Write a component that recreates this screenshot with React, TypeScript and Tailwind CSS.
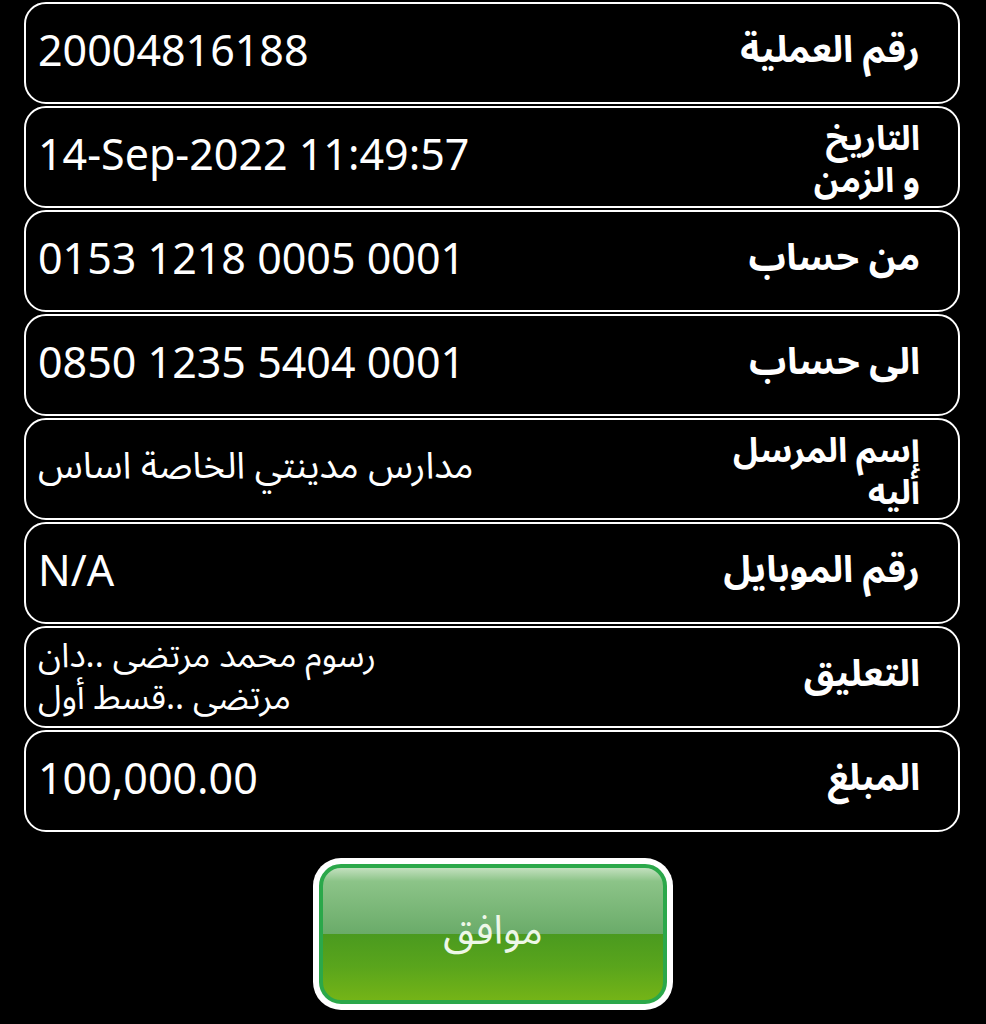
import React from "react";

const rows: { label: string[]; value: string[]; arabicValue?: boolean }[] = [
  { label: ["رقم العملية"], value: ["20004816188"] },
  { label: ["التاريخ", "و الزمن"], value: ["14-Sep-2022 11:49:57"] },
  { label: ["من حساب"], value: ["0153 1218 0005 0001"] },
  { label: ["الى حساب"], value: ["0850 1235 5404 0001"] },
  { label: ["إسم المرسل", "أليه"], value: ["مدارس مدينتي الخاصة اساس"], arabicValue: true },
  { label: ["رقم الموبايل"], value: ["N/A"] },
  { label: ["التعليق"], value: ["رسوم محمد مرتضى ..دان", "مرتضى ..قسط أول"], arabicValue: true },
  { label: ["المبلغ"], value: ["100,000.00"] },
];

const arabicFont = "[font-family:'Noto_Sans_Arabic','DejaVu_Sans',sans-serif]";

export default function App() {
  return (
    <div className="min-h-[1024px] w-[986px] bg-black text-white overflow-hidden">
      <div className="flex flex-col gap-[2px] pl-[24px] pr-[26px] pt-[2px]">
        {rows.map((r, i) => (
          <div
            key={i}
            className="flex h-[102px] items-center justify-between rounded-[22px] border-2 border-white pl-[12px] pr-[38px]"
          >
            <div className="pb-[6px]">
              {r.arabicValue ? (
                <div
                  dir="rtl"
                  className={`${arabicFont} text-left ${r.value.length > 1 ? "text-[34px] leading-[42px] pt-[6px]" : "text-[37px] leading-[46px]"}`}
                >
                  {r.value.map((v, j) => (
                    <div key={j}>{v}</div>
                  ))}
                </div>
              ) : (
                <div className="[font-family:'Noto_Sans',sans-serif] text-[43px] leading-[50px]">
                  {r.value[0]}
                </div>
              )}
            </div>
            <div
              dir="rtl"
              className={`${arabicFont} text-right font-bold ${r.label.length > 1 ? "text-[34px] leading-[42px] pt-[6px]" : "text-[37px] leading-[46px] pb-[6px]"}`}
            >
              {r.label.map((l, j) => (
                <div key={j}>{l}</div>
              ))}
            </div>
          </div>
        ))}
      </div>
      <div className="flex justify-center pt-[26px]">
        <div className="h-[152px] w-[360px] rounded-[28px] bg-white p-[6px]">
          <div className="flex h-full w-full items-center justify-center rounded-[22px] border-4 border-[#2ba84a] bg-[linear-gradient(to_bottom,#c3e0bf_0%,#8cc488_10%,#6aab69_50%,#4a9a1f_50%,#5aa51c_75%,#74b417_100%)]">
            <span dir="rtl" className={`${arabicFont} text-[40px] text-[#eef7e8] pb-[4px]`}>
              موافق
            </span>
          </div>
        </div>
      </div>
    </div>
  );
}
